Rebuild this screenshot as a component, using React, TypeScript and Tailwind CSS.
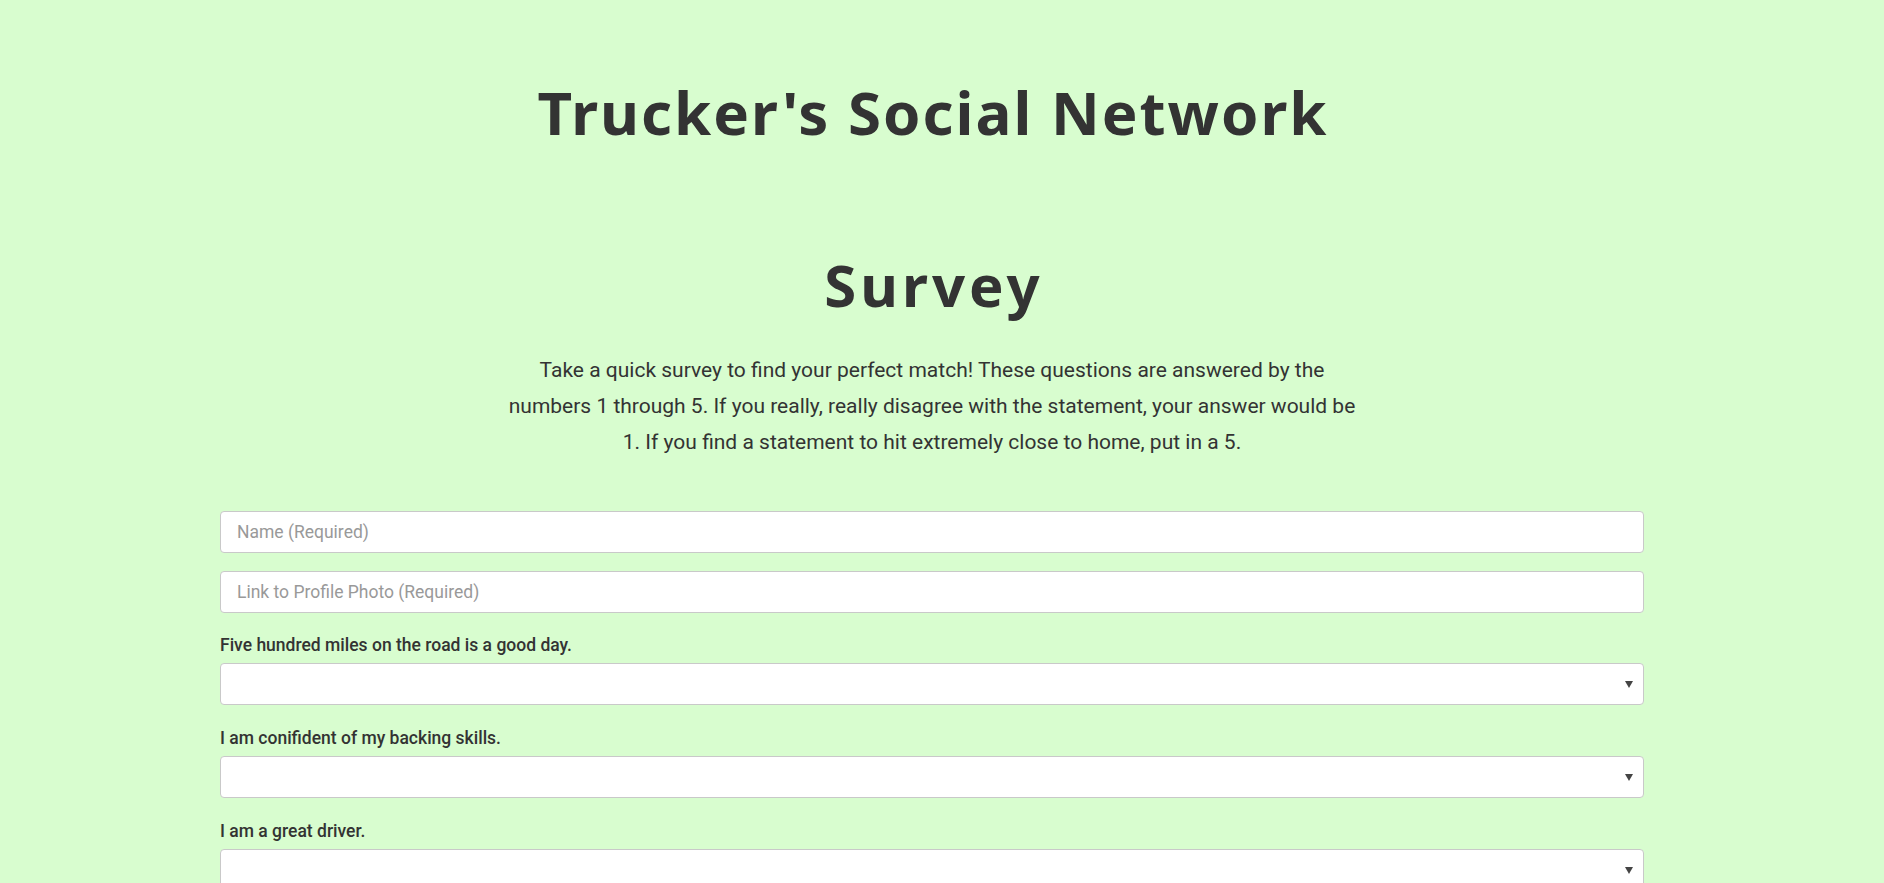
import React from "react";

const questions = [
  "Five hundred miles on the road is a good day.",
  "I am conifident of my backing skills.",
  "I am a great driver.",
  "I enjoy long hauls across the country.",
];

function Select({ label }: { label: string }) {
  return (
    <div className="flex flex-col">
      <label className="text-[17.5px] leading-[20px] font-medium text-[#333] mb-[8px]">
        {label}
      </label>
      <div className="relative h-[42px] w-full rounded-[4px] border border-[#c9c9c9] bg-white">
        <svg className="absolute right-[10px] top-[17px]" width="8" height="7" viewBox="0 0 8 7">
          <path d="M0 0 L8 0 L4 7 Z" fill="#444" />
        </svg>
      </div>
    </div>
  );
}

export default function App() {
  return (
    <div className="min-h-screen w-full bg-[#d8fdcf]" style={{ fontFamily: "Roboto, 'Liberation Sans', sans-serif" }}>
      <div className="w-[1864px] flex flex-col items-center">
        <h1
          className="mt-[82px] pl-[2px] text-[60px] leading-[60px] font-bold text-[#333] tracking-[2px]"
          style={{ fontFamily: "'Noto Sans', 'Open Sans', sans-serif" }}
        >
          Trucker's Social Network
        </h1>
        <h2
          className="mt-[115px] pl-[4px] text-[58px] leading-[56px] font-bold text-[#333] tracking-[4px]"
          style={{ fontFamily: "'Noto Sans', 'Open Sans', sans-serif" }}
        >
          Survey
        </h2>
        <p className="mt-[39px] text-[21px] leading-[36px] text-[#333] text-center w-[900px]">
          Take a quick survey to find your perfect match! These questions are answered by the
          <br />
          numbers 1 through 5. If you really, really disagree with the statement, your answer would be
          <br />
          1. If you find a statement to hit extremely close to home, put in a 5.
        </p>
        <form className="mt-[51px] w-[1424px] flex flex-col">
          <input
            className="h-[42px] w-full rounded-[4px] border border-[#c9c9c9] bg-white px-[16px] text-[17.5px] text-[#333] placeholder:text-[#999] outline-none"
            placeholder="Name (Required)"
          />
          <input
            className="mt-[18px] h-[42px] w-full rounded-[4px] border border-[#c9c9c9] bg-white px-[16px] text-[17.5px] text-[#333] placeholder:text-[#999] outline-none"
            placeholder="Link to Profile Photo (Required)"
          />
          <div className="mt-[22px] flex flex-col gap-[23px]">
            {questions.map((q) => (
              <Select key={q} label={q} />
            ))}
          </div>
        </form>
      </div>
    </div>
  );
}
